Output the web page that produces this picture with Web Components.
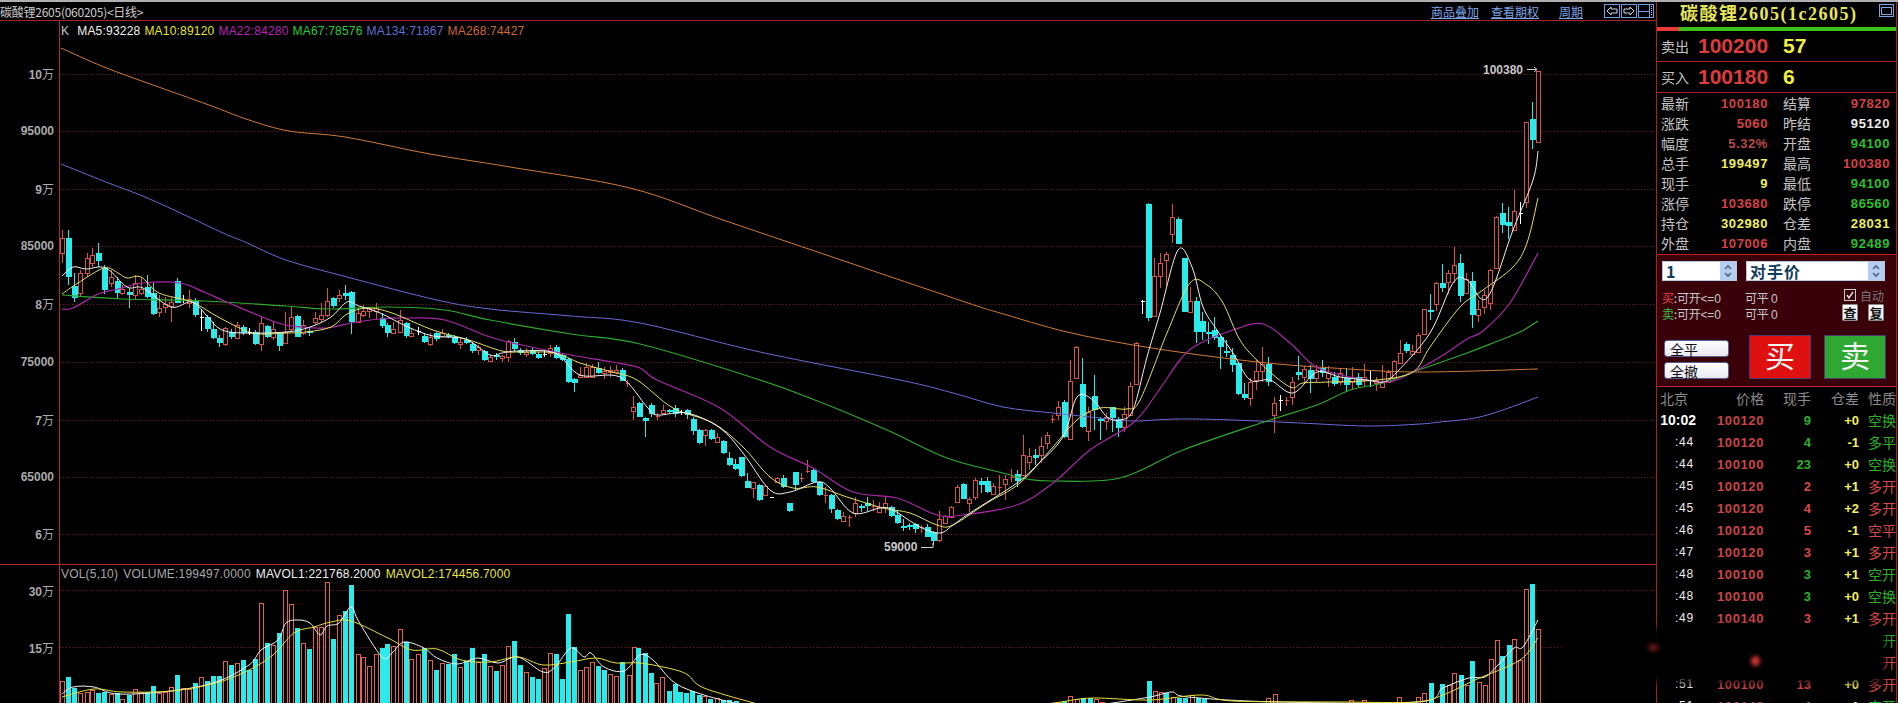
<!DOCTYPE html>
<html lang="zh"><head><meta charset="utf-8"><title>碳酸锂2605</title>
<style>
html,body{margin:0;padding:0;background:#000;width:1898px;height:703px;overflow:hidden}
</style></head><body>
<qh-app>
  <qh-header slot="head" name="碳酸锂2605(060205)&lt;日线&gt;"></qh-header>
  <qh-price slot="price"></qh-price>
  <qh-volume slot="vol"></qh-volume>
  <qh-quote slot="quote"></qh-quote>
</qh-app>
<script>
const SANS='"Liberation Sans","Noto Sans CJK SC",sans-serif';
const CJK='"Noto Sans CJK SC","Liberation Sans",sans-serif';
const C={red:'#d8524a',cy:'#2ceaea',w:'#f2f2f2',y:'#e4e060',m:'#a828a8',g:'#2fa82f',b:'#6a6ad8',o:'#d07a3c',grid:'#761414',line:'#a82424'};

/* --- digitised candles: type+x top bot hi lo, in crop coordinates --- */
const G1=`r152 55 100 30 128|c167 55 172 30 196|c182 198 233 160 245|r197 160 218 150 230|r212 115 160 100 170|r226 105 130 85 140|c241 100 122 68 140|c256 143 210 135 222|r271 172 188 150 200|c286 183 218 170 238|r300 208 218 195 225|c315 216 225 205 263|r330 190 224 165 240|r345 207 220 175 225|c359 201 230 165 235|c374 220 282 190 285|r389 265 277 225 290|r404 252 262 230 280|r418 245 258 230 305|c433 183 248 175 250|w448 240 240 225 250|r463 238 250 210 265|c477 242 285 235 290|w492 292 292 270 332|c507 290 328 285 335|c522 328 353 305 358|c536 353 370 345 380|r551 325 372 320 378|c566 335 350 328 357|r581 315 355 305 358|c595 322 340 315 345|w610 337 337 325 345|c625 335 373 330 375|r640 310 373 290 392|c654 318 352 315 355|r669 328 352 305 360|c684 340 378 335 392|r699 335 368 275 370|r713 292 328 262 335|c728 288 350 285 352|r743 315 340 300 345|c758 333 338 320 348|r772 295 305 275 315|r787 285 298 250 305|r802 243 285 205 290|c817 235 258 232 265|r831 225 235 210 245|c846 220 228 195 240|c861 216 305 212 343|r876 280 305 265 308|r890 272 285 255 290|r905 265 272 260 295|r920 265 272 250 300|c935 295 318 280 325|c949 316 338 310 350|r964 328 338 305 340|r979 300 335 270 340|c994 310 347 305 355|r1008 338 347 325 348|w1023 332 332 320 345|c1038 348 366 340 368|r1053 352 372 340 378|c1067 338 358 335 362|r1082 340 348 328 350|c1097 345 352 338 355|c1112 352 370 345 372|r1126 365 372 355 388|c1141 360 370 350 372|c1156 372 393 365 400|r1171 382 390 375 405|c1185 393 420 390 422|r1200 412 422 405 424|c1215 406 411 400 420|r1230 408 415 405 425|r1244 363 412 360 425|c1259 365 388 355 392|c1274 390 400 385 405|r1289 395 403 385 412|c1303 390 402 385 405|c1318 402 414 395 416|w1333 402 402 390 412|r1348 385 400 375 410|c1362 382 413 375 418|c1377 405 420 400 422|c1392 418 485 415 488|c1407 478 488 475 515|r1421 465 470 440 472|r1436 440 470 430 472|r1451 440 470 432 472|c1466 445 460 425 462|r1480 452 458 440 478|r1495 450 456 438 472|r1510 450 456 435 460|c1525 450 482 445 484|R1537 490 490 480 502`;
const G2=`r38 80 92 48 120|c56 68 110 65 112|c74 115 122 112 172|c92 75 102 68 110|R110 109 109 100 120|r128 90 100 75 102|c146 90 96 88 98|c164 85 102 75 110|w182 97 97 90 104|c200 90 105 88 118|c218 118 152 112 165|c236 150 190 148 192|r254 150 165 148 198|c272 150 178 148 180|r290 172 185 160 186|c308 183 220 180 222|c326 235 255 215 258|c344 252 268 238 270|c362 232 288 230 290|c380 303 323 280 325|r398 307 325 305 355|c416 315 360 313 362|r434 318 345 315 348|w452 352 352 352 352|r470 295 307 290 310|c488 293 320 285 325|c506 370 393 368 396|c524 277 315 275 330|R542 295 295 280 305|R560 272 272 240 280|c578 270 305 265 308|c596 305 345 303 347|R614 345 345 320 370|c632 345 387 343 400|c650 390 417 388 420|r668 408 422 395 424|R686 410 410 405 440|r704 370 398 350 412|c722 378 385 372 395|c740 370 378 352 392|R758 378 378 360 392|r776 380 395 365 400|r794 370 380 352 398|c812 382 408 378 410|c830 405 430 392 432|c848 438 441 418 452|c866 435 440 430 450|c884 432 447 428 458|R902 442 442 435 458|c920 440 470 432 472|c938 457 483 452 495|r956 418 480 392 485|r974 407 428 405 430|r992 382 410 378 412|r1010 320 367 315 370|c1028 313 357 310 358|r1046 358 370 350 395|r1064 300 352 295 360|c1082 303 315 293 340|c1100 303 335 292 338|r1118 318 342 310 345|R1136 320 320 285 345|r1154 297 312 285 360|R1172 290 290 268 305|c1190 283 303 270 320|r1208 225 285 165 288|r1226 227 245 205 270|c1244 225 235 208 255|r1262 198 225 170 250|r1280 165 190 155 208`;
const G3=`R157 716 716 705 728|r175 680 706 662 720|c193 666 770 660 775|r211 603 778 540 780|r229 501 593 498 595|c247 612 740 535 745|r265 697 752 680 782|c283 648 690 585 750|c301 716 724 712 780|r319 712 722 700 750|c337 682 715 680 755|c355 716 745 710 770|r373 703 740 680 755|r391 618 705 605 708|r409 488 613 487 615|W427 362 362 360 402|c445 72 415 70 422|r463 287 407 235 408|r481 250 287 220 325|r499 223 240 215 320|r517 112 162 72 188|c535 117 192 112 193|c553 235 395 233 396|r571 362 395 322 396|c589 363 457 352 488|c607 423 455 395 480|c625 456 460 425 492|c643 450 475 410 480|c661 472 500 465 568|c679 513 518 480 530|c697 524 555 505 575|c715 548 642 546 645|c733 642 655 610 660|r751 605 655 595 678|r769 572 600 540 630|r787 553 572 500 605|c805 552 605 530 618|r823 668 705 650 758|w841 660 660 645 692|R859 660 660 650 678|r877 607 650 590 675|c895 575 585 528 600|r913 568 590 558 610|c931 570 598 555 638|r949 570 595 555 605|c967 565 580 540 590|r985 580 595 558 622|c1003 590 612 575 618|r1021 580 605 565 615|c1039 595 615 565 635|r1057 590 605 562 630|c1075 590 615 580 620|r1093 590 600 552 622|w1111 600 600 570 620|r1129 600 610 592 632|r1147 605 622 555 625|r1165 575 605 570 608`;
const G4=`r43 932 985 930 990|r61 908 938 870 940|c79 883 903 876 910|r97 902 912 885 918|r115 856 906 850 908|r133 778 852 776 855|c151 780 784 732 810|r169 700 762 695 782|c187 700 714 642 725|r205 670 695 660 732|r223 646 668 590 700|c241 640 738 612 755|r259 686 728 670 730|c277 693 795 665 835|r295 778 794 750 815|r313 735 770 720 792|r331 660 758 658 780|r349 500 655 498 658|c367 490 524 458 550|c385 516 527 470 568|r403 482 540 420 542|w421 490 490 455 522|r439 217 455 215 475|c457 207 270 155 298|r475 63 275 62 276`;
function candles(src,fx,fy){return src.split('|').map(s=>{const t=s[0],[x,a,b,h,l]=s.slice(1).split(' ').map(Number);return{t,x:fx(x),a:fy(a),b:fy(b),h:fy(h),l:fy(l)}})}
const CANDLES=[
 ...candles(G1,z=>z/2.45,z=>220+z/3),
 ...candles(G2,z=>620+z/3,z=>380+z/3),
 ...candles(G3,z=>1000+z/3,z=>180+z/3),
 ...candles(G4,z=>1380+z/3,z=>50+z/3)];

const MA={
 o:'61,48 104,67 153,85 209,105 249,120 289,131 345,137 430,154 510,167 630,188 726,221 847,262 968,303 1000,313 1067,332 1133,345 1200,355 1267,363 1333,368 1417,372 1538,369',
 b:'61,164 106,182 145,197 189,217 223,233 245,242 286,260 347,277 437,300 490,309 571,316 640,323 760,352 900,380 953,393 1003,407 1053,413 1100,418 1133,421 1177,419 1233,420 1300,423 1367,426 1420,424 1440,422 1475,418 1503,410 1538,397',
 g:'62,295 122,299 204,301 286,306 327,309 388,307 445,310 490,320 571,334 640,344 760,380 820,402 887,430 947,458 1003,473 1027,479 1053,481 1120,478 1183,450 1267,421 1317,405 1350,390 1383,383 1413,372 1467,353 1493,343 1520,332 1538,321',
 m:'62,309 73,308 98,294 118,289 143,283 180,283 204,292 229,303 278,323 302,327 327,328 351,323 380,319 408,318 445,320 490,337 531,347 571,355 612,362 640,368 657,380 720,408 770,447 813,468 853,492 897,498 937,515 963,515 1017,505 1053,483 1090,450 1133,423 1157,393 1180,360 1197,345 1233,330 1263,324 1290,343 1313,365 1333,373 1367,380 1390,382 1413,372 1440,357 1467,339 1483,331 1510,303 1538,253',
 y:'62,294 78,283 104,268 118,273 127,278 141,277 159,293 192,302 220,318 253,333 286,333 306,332 331,327 347,314 367,308 392,313 433,330 469,340 502,351 522,352 555,353 580,363 612,372 637,380 673,408 713,423 743,447 770,477 793,488 817,487 847,497 883,508 910,513 937,525 953,525 987,503 1020,483 1053,447 1077,420 1100,408 1127,409 1140,400 1167,333 1190,283 1207,285 1223,303 1240,340 1260,363 1290,387 1303,383 1330,382 1377,380 1413,372 1430,347 1460,307 1483,290 1513,267 1527,243 1538,198',
 w:'62,276 73,267 86,269 106,268 127,287 143,288 171,307 192,302 208,317 220,329 241,333 286,332 310,327 331,317 347,302 359,306 380,313 408,327 433,336 465,339 490,355 502,353 518,351 555,353 580,375 620,377 647,407 657,415 687,413 720,428 743,453 770,490 790,492 817,482 830,488 853,513 880,508 893,510 920,527 940,533 953,525 970,513 1017,483 1037,465 1063,437 1077,397 1093,400 1107,417 1120,420 1133,410 1147,357 1160,313 1178,250 1192,267 1203,307 1217,330 1233,353 1250,380 1270,380 1293,393 1317,372 1340,377 1367,380 1383,382 1397,372 1430,333 1453,283 1467,280 1487,298 1513,230 1533,180 1538,151'
};
/* volume bars: type+x top */
const V1=`r152 423|c167 411|c182 445|r197 458|r212 455|r226 450|c241 458|c256 455|r271 462|c286 458|r300 478|c315 465|r330 448|r345 455|c359 455|c374 438|r389 460|r404 455|r418 442|c433 405|r448 445|r463 448|c477 430|r492 412|c507 423|c522 408|c536 408|r551 363|c566 375|r581 370|c595 360|c610 390|c625 357|r640 190|c654 310|r669 315|c684 280|r699 150|r713 193|c728 265|r743 310|c758 327|r772 262|r787 262|r802 125|c817 297|r831 225|c846 213|c861 135|r876 343|r890 352|r905 378|r920 343|c935 325|c949 312|r964 318|r979 268|c994 305|r1008 358|r1023 343|c1038 325|r1053 360|c1067 390|r1082 370|c1097 372|c1112 343|r1126 382|c1141 362|c1156 323|r1171 366|c1185 342|r1200 378|c1215 392|r1230 375|r1244 318|c1259 303|c1274 375|r1289 397|c1303 410|c1318 417|r1333 385|r1348 340|c1362 342|c1377 417|c1392 222|c1407 322|r1421 390|r1436 382|r1451 367|c1466 378|c1480 390|r1495 402|r1510 408|c1525 365|r1540 405|r1554 320|c1563 323`;
const V2=`c8 280|c17 340|r25 370|r35 352|c45 393|c55 372|c63 396|c72 400|c82 392|c92 405|r100 408|c110 418|r120 415|c130 420|c140 420|c150 422|r655 425|c665 422|r675 408|r685 418|c695 415|c705 415|r715 418|r725 425|c798 363|r807 393|r817 396|c825 400|r835 410|c845 415|c855 415|r865 405|c875 415|c885 418|r985 415|r995 402|r1115 420|r1135 420|r1190 412|r1220 412|r1230 400|c1240 370|c1258 372|r1268 375|r1277 340|c1287 345|r1296 375|c1305 303|r1315 365|r1325 375|r1334 298|r1343 240|c1352 288|c1362 255|r1371 237|r1380 300|r1390 88|c1399 72|r1408 208`;
function bars(src,fx,fy){return src.split('|').map(s=>{const [x,y]=s.slice(1).split(' ').map(Number);return{t:s[0],x:fx(x),y:fy(y)}})}
const VOLS=[...bars(V1,z=>z/2.45,z=>540+z/3),...bars(V2,z=>640+z/1.568,z=>560+z/3)];
const VL={
 w:['62,694 73,687 94,687 118,694 171,691 216,682 249,665 261,650 278,640 286,623 298,620 310,623 320,635 327,626 339,623 351,607 359,622 382,657 392,653 404,642 424,648 437,658 457,664 478,658 498,663 518,657 543,672 555,667 571,648 584,657 591,653 604,667 624,671 640,655 653,660 675,683 704,695 742,705','1100,705 1150,697 1172,692 1188,697 1278,702 1418,702 1443,688 1469,678 1485,677 1498,665 1514,648 1523,647 1538,620'],
 y:['62,697 94,689 122,692 171,691 216,683 249,670 273,655 294,633 314,627 331,622 351,621 388,638 412,650 437,649 461,660 490,662 518,657 543,665 571,662 596,658 616,663 640,663 672,669 688,675 704,688 761,705','1040,705 1061,702 1093,698 1150,700 1201,695 1233,701 1342,702 1415,702 1443,695 1475,680 1520,660 1538,638']
};

function def(name,tpl,init){
  const t=document.createElement('template');t.innerHTML=tpl;
  customElements.define(name,class extends HTMLElement{
    constructor(){super();this.attachShadow({mode:'open'}).appendChild(t.content.cloneNode(true));if(init)init(this,this.shadowRoot)}
  });
}

/* ---------- root ---------- */
def('qh-app',`<style>
:host{display:grid;grid-template-columns:1656px 242px;grid-template-rows:2px 19px 543px 1fr;width:1898px;height:703px;background:#000;color:#ccc;font-family:${SANS};position:relative;overflow:hidden}
.top{grid-column:1/3;background:#b0b0b0}
.quote{grid-column:2;grid-row:2/5;min-height:0}
.mask{position:absolute;left:1562px;top:628px;width:322px;height:54px;background:#000;filter:blur(4px)}
.blob{position:absolute;border-radius:50%;filter:blur(2px)}
.b1{left:1648px;top:644px;width:11px;height:7px;background:#6a1616}
.b2{left:1751px;top:656px;width:9px;height:10px;background:#d83636}
</style>
<div class="top"></div>
<slot name="head"></slot>
<slot name="price"></slot>
<slot name="vol"></slot>
<div class="quote"><slot name="quote"></slot></div>
<div class="mask"></div><div class="blob b1"></div><div class="blob b2"></div>`);

/* ---------- header ---------- */
def('qh-header',`<style>
:host{display:flex;align-items:center;height:18px;border-bottom:1px solid ${C.line};font:12px ${CJK};color:#ccc;white-space:nowrap}
.name{flex:none;letter-spacing:-.25px}
.links{margin-left:auto;display:flex;align-items:center;padding-right:2px}
a{color:#7ca4e6;text-decoration:underline;font-size:12px;letter-spacing:0}
a+a{margin-left:12px}
a.p{margin-left:20px}
svg{display:block;margin-left:21px}
</style>
<span class="name"></span>
<div class="links"><a>商品叠加</a><a>查看期权</a><a class="p">周期</a>
<svg width="50" height="14" viewBox="0 0 50 14" fill="none" stroke="#6f9ee2">
<rect x=".5" y=".5" width="15" height="13"/><path stroke="#c8d8f0" d="M3 7l4-4v2h6v4H7v2z"/>
<rect x="17.5" y=".5" width="15" height="13"/><path stroke="#c8d8f0" d="M30 7l-4-4v2h-6v4h6v2z"/>
<rect x="34.5" y=".5" width="15" height="13"/><path d="M35 7.5h10M45.5 1v12"/><path stroke="#c8d8f0" stroke-dasharray="1 1" d="M47.5 2v10"/>
</svg></div>`,(el,r)=>{r.querySelector('.name').textContent=el.getAttribute('name')});

/* ---------- panes ---------- */
const axisCss=`.axis{position:relative;width:59px;border-right:1px solid #b82a2a;font:bold 12px ${CJK};color:#aaa}
.axis span{position:absolute;right:5px;transform:translateY(-50%);line-height:14px;font-family:${SANS},${CJK}}
.axis b{font-family:${CJK};font-weight:400}
.plot{position:relative;flex:1;overflow:hidden}
svg{display:block;position:absolute;left:0;top:0}
.leg{position:absolute;left:1px;display:flex;gap:4px;font:12px ${SANS};white-space:nowrap;line-height:14px;letter-spacing:.2px}`;
function gridLines(ys){return ys.map(y=>`<line x1="60" x2="1656" y1="${y+.5}" y2="${y+.5}" stroke="${C.grid}" stroke-dasharray="1 2"/>`).join('')}
/* smooth curve through the digitised points (Catmull-Rom to Bezier) */
function poly(pts,col,w=1){
  const p=pts.split(' ').map(s=>s.split(',').map(Number));
  let d=`M${p[0][0]} ${p[0][1]}`;
  for(let i=0;i<p.length-1;i++){
    const a=p[i-1]||p[i],b=p[i],c=p[i+1],e=p[i+2]||c;
    d+=`C${(b[0]+(c[0]-a[0])/6).toFixed(1)} ${(b[1]+(c[1]-a[1])/6).toFixed(1)} ${(c[0]-(e[0]-b[0])/6).toFixed(1)} ${(c[1]-(e[1]-b[1])/6).toFixed(1)} ${c[0]} ${c[1]}`;
  }
  return `<path fill="none" d="${d}" stroke="${col}" stroke-width="${w}" stroke-linejoin="round"/>`;
}
function drawCandles(){return CANDLES.map(c=>{
  const X=Math.round(c.x),a=Math.round(c.a),b=Math.round(c.b),h=Math.round(c.h),l=Math.round(c.l);
  if(c.t==='c')return `<path stroke="${C.cy}" d="M${X+.5} ${h}V${l}"/><rect x="${X-2}" y="${a}" width="6" height="${Math.max(b-a,2)}" fill="${C.cy}"/>`;
  if(c.t==='r')return `<path stroke="${C.red}" d="M${X+.5} ${h}V${a}M${X+.5} ${b}V${l}"/><rect x="${X-1.5}" y="${a+.5}" width="4" height="${Math.max(b-a,1)}" fill="#000" stroke="${C.red}"/>`;
  const col=c.t==='R'?'#e84848':'#fff';
  return `<path stroke="${col}" d="M${X+.5} ${h}V${l}M${X-1.5} ${a+.5}H${X+3}"/>`;
}).join('')}
const PY=[74,131,189,246,304,362,420,477,534];
def('qh-price',`<style>:host{display:flex;height:543px}${axisCss}
.leg{top:3px}
.k{color:#c8c8c8;margin-right:4px}.a{color:#f2f2f2}.b{color:#e6e625}.c{color:#bb20bb}.d{color:#24cc3c}.e{color:#5f6fd6}.f{color:#cf6a34}
.tag{position:absolute;font:bold 12px ${SANS};color:#c8c8c8;line-height:14px}
</style>
<div class="axis"></div>
<div class="plot"><svg width="1596" height="543" viewBox="60 21 1596 543"></svg>
<div class="leg"><span class="k">K</span><span class="a">MA5:93228</span><span class="b">MA10:89120</span><span class="c">MA22:84280</span><span class="d">MA67:78576</span><span class="e">MA134:71867</span><span class="f">MA268:74427</span></div>
<span class="tag" style="left:1423px;top:42px">100380</span>
<span class="tag" style="left:824px;top:519px">59000</span>
</div>`,(el,r)=>{
  const labs=[['10','万'],['95000',''],['9','万'],['85000',''],['8','万'],['75000',''],['7','万'],['65000',''],['6','万']];
  r.querySelector('.axis').innerHTML=labs.map((l,i)=>`<span style="top:${PY[i]-21}px">${l[0]}${l[1]?`<b>${l[1]}</b>`:''}</span>`).join('');
  r.querySelector('svg').innerHTML=gridLines(PY)+`<g shape-rendering="crispEdges">${drawCandles()}</g>`+
   poly(MA.o,C.o)+poly(MA.b,C.b)+poly(MA.g,C.g,1.2)+poly(MA.m,C.m,1.2)+poly(MA.y,C.y)+poly(MA.w,C.w)+
   `<path fill="none" stroke="#d0d0d0" d="M1527 69.5H1537M1534 67l3 2.5-3 2.5M921 547.5H933V543"/>`;
});

def('qh-volume',`<style>:host{display:flex;border-top:1px solid #b82a2a;min-height:0}${axisCss}
.leg{top:2px;gap:5px}
.g{color:#a8a8a8}.a{color:#f0f0f0}.b{color:#e6e640}
</style>
<div class="axis"><span style="top:26px">30<b>万</b></span><span style="top:83px">15<b>万</b></span></div>
<div class="plot"><svg width="1596" height="138" viewBox="60 565 1596 138"></svg>
<div class="leg"><span class="g">VOL(5,10)</span><span class="g">VOLUME:199497.0000</span><span class="a">MAVOL1:221768.2000</span><span class="b">MAVOL2:174456.7000</span></div></div>`,(el,r)=>{
  const bs=VOLS.map(v=>{const X=Math.round(v.x),y=Math.round(v.y);
    return v.t==='c'?`<rect x="${X-2}" y="${y}" width="5" height="${710-y}" fill="${C.cy}"/>`
      :`<rect x="${X-1.5}" y="${y+.5}" width="4" height="${710-y}" fill="#000" stroke="#e6604f"/>`}).join('');
  r.querySelector('svg').innerHTML=gridLines([590,647])+`<g shape-rendering="crispEdges">${bs}</g>`+
   VL.w.map(p=>poly(p,'#f4f4f4')).join('')+VL.y.map(p=>poly(p,'#e6e040')).join('');
});

/* ---------- small widgets ---------- */
def('qh-spin',`<style>
:host{display:flex;height:20px;background:#fff;box-sizing:border-box;border:1px solid #b9c6dc;color:#123c5c;font:bold 16px ${CJK};line-height:18px;letter-spacing:1px}
.t{flex:1;padding-left:3px;white-space:nowrap;overflow:hidden}
.btn{width:16px;background:#b6cdf2;display:flex;align-items:center;justify-content:center}
svg{display:block}
</style><div class="t"><slot></slot></div><div class="btn"><svg width="10" height="14" viewBox="0 0 10 14" fill="none" stroke="#50607a" stroke-width="1.6"><path d="M2 5l3-3 3 3M2 9l3 3 3-3"/></svg></div>`);

def('qh-btn',`<style>
:host{display:flex;align-items:center;box-sizing:border-box;background:linear-gradient(#fff,#e8e8f0);border:1px solid #5a5f90;border-radius:3px;color:#111;font:14px ${CJK};line-height:16px;height:17px}
</style><slot></slot>`);

def('qh-trade',`<style>
:host{display:flex;align-items:center;justify-content:center;width:62px;height:44px;box-sizing:border-box;border:1px solid #4a3a70;color:#f4f4f4;font:30px "Liberation Serif","Noto Sans CJK SC",serif;line-height:40px}
</style><slot></slot>`);

/* ---------- quote panel ---------- */
const STATS=[['最新','100180','r','结算','97820','r'],['涨跌','5060','r','昨结','95120','w'],['幅度','5.32%','d','开盘','94100','g'],['总手','199497','y','最高','100380','r'],['现手','9','y','最低','94100','g'],['涨停','103680','r','跌停','86560','g'],['持仓','302980','y','仓差','28031','y'],['外盘','107006','r','内盘','92489','g']];
def('qh-stats',`<style>
:host{display:grid;grid-template-columns:32px 75px 47px 75px;grid-auto-rows:20px;padding:0 0 1px 4px;height:161px;box-sizing:border-box;align-items:center;font:14px ${CJK};color:#c4c4c4;white-space:nowrap}
.v{font:bold 13px ${SANS};letter-spacing:.6px;text-align:right}
.l2{padding-left:15px}
.r{color:#d8404a}.w{color:#f0f0f0}.g{color:#2cc02c}.y{color:#f0f060}.d{color:#b84a48}
</style>`,(el,r)=>{
  r.appendChild(document.createRange().createContextualFragment(STATS.map(s=>`<span>${s[0]}</span><span class="v ${s[2]}">${s[1]}</span><span class="l2">${s[3]}</span><span class="v ${s[5]}">${s[4]}</span>`).join('')));
});

def('qh-order',`<style>
:host{display:block;height:133px;box-sizing:border-box;background:#39000a;border-top:1px solid #c02020;border-bottom:1px solid #b82a3a;padding:6px 10px 0 5px;font:12px ${CJK};color:#c8c8c8;white-space:nowrap}
.spins{display:flex;gap:9px}
.mid{display:flex;justify-content:space-between;margin-top:9px;height:32px}
.info div{display:grid;grid-template-columns:83px auto;height:16px;line-height:16px;letter-spacing:-.2px}
i{font-style:normal}.br{color:#e84a4a}.bg{color:#3cc03c}
.num{font-family:${SANS}}
.ctl{padding-right:2px}
.auto{display:flex;align-items:center;gap:4px;color:#7a7a7a;height:14px;margin:-2px 0 2px 2px;font-size:12px}
.cb{width:12px;height:12px;box-sizing:border-box;border:1px solid #ccc;background:#39000a}
.cb svg{display:block}
.q{display:flex;gap:10px}
.q qh-btn{width:16px;justify-content:center;font-size:13px;font-weight:700;border-radius:1px;border-color:#888}
.bot{display:flex;margin-top:13px}
.left{width:65px;margin:5px 20px 0 2px;display:flex;flex-direction:column;gap:5px}
.left qh-btn{padding-left:5px}
.buy{background:#de1010;margin-right:13px}.sell{background:#2ea832}
</style>
<div class="spins"><qh-spin style="width:75px">1</qh-spin><qh-spin style="width:139px">对手价</qh-spin></div>
<div class="mid"><div class="info">
<div><span><i class="br">买</i>:可开<span class="num">&lt;=0</span></span><span>可平 <span class="num">0</span></span></div>
<div><span><i class="bg">卖</i>:可开<span class="num">&lt;=0</span></span><span>可平 <span class="num">0</span></span></div>
</div><div class="ctl"><div class="auto"><span class="cb"><svg width="10" height="10" viewBox="0 0 10 10" fill="none" stroke="#ddd" stroke-width="1.5"><path d="M2 5l2 3 4-6"/></svg></span>自动</div>
<div class="q"><qh-btn>查</qh-btn><qh-btn>复</qh-btn></div></div></div>
<div class="bot"><div class="left"><qh-btn>全平</qh-btn><qh-btn>全撤</qh-btn></div>
<qh-trade class="buy">买</qh-trade><qh-trade class="sell">卖</qh-trade></div>`);

const TICKS=[['10:02','100120','9','g','+0','空换','g'],[':44','100120','4','g','-1','多平','g'],[':44','100100','23','g','+0','空换','g'],[':45','100120','2','r','+1','多开','r'],[':45','100120','4','r','+2','多开','r'],[':46','100120','5','r','-1','空平','r'],[':47','100120','3','r','+1','多开','r'],[':48','100100','3','g','+1','空开','g'],[':48','100100','3','g','+0','空换','g'],[':49','100140','3','r','+1','多开','r'],null,null,[':51','100100','13','r','+0','多开','r'],[':51','100140','4','g','+1','空开','g']];
def('qh-ticks',`<style>
:host{display:block;flex:1;min-height:0;overflow:hidden;font:bold 13px ${SANS};white-space:nowrap}
.row{display:grid;grid-template-columns:39px 68px 47px 48px 37px;height:22px;align-items:center;overflow:hidden}
.head{color:#8c8c8c;font:14px ${CJK}}
.head span:first-child{text-align:left;padding-left:3px}
.row>span{text-align:right}
.row>span:last-child{text-align:left;padding-left:9px;font:14px ${CJK};overflow:hidden}
.head>span:last-child{color:#8c8c8c}
.only>span:last-child{text-align:right;padding:0 0 0 0;grid-column:5}
.tm{font-weight:400;font-size:12px;color:#eee;letter-spacing:.8px;padding-right:2px}
.first{font:bold 14px ${SANS};color:#fff;letter-spacing:0;padding-right:0}
.p{color:#cc444a;letter-spacing:.6px}.d{color:#f2f060}
.r{color:#d8484a}.g{color:#2cb02c}
</style><div class="row head"><span>北京</span><span>价格</span><span>现手</span><span>仓差</span><span>性质</span></div>`,(el,r)=>{
  const rows=TICKS.map((t,i)=>{
    if(!t)return `<div class="row only"><span class="${i===10?'g':'r'}">开</span></div>`;
    return `<div class="row"><span class="tm${i?'':' first'}">${t[0]}</span><span class="p">${t[1]}</span><span class="${t[3]}">${t[2]}</span><span class="d">${t[4]}</span><span class="${t[6]}">${t[5]}</span></div>`;
  }).join('');
  r.appendChild(document.createRange().createContextualFragment(rows));
});

def('qh-quote',`<style>
:host{display:flex;flex-direction:column;height:701px;box-sizing:border-box;border-left:1px solid ${C.line};border-right:1px solid ${C.line};margin-right:1px;background:#000;font-family:${CJK}}
.title{position:relative;height:25px;box-sizing:border-box;padding-left:23px;line-height:25px;font:bold 18px/25px "Liberation Serif","Noto Sans CJK SC",serif;letter-spacing:1.5px;color:#e6e65a;white-space:nowrap}
.title svg{position:absolute;right:2px;top:2px}
.bar{height:4px;background:linear-gradient(90deg,#e83838 22px,#3cc01c 22px)}
.best{display:grid;grid-template-columns:37px 85px auto;align-items:center;padding-left:4px;height:31px;border-bottom:1px solid ${C.line};box-sizing:border-box;font:14px ${CJK};color:#c4c4c4}
.best b{font:bold 21px ${SANS}}
.pr{color:#de3c3c}.vo{color:#f0f040}
</style>
<div class="title">碳酸锂2605(1c2605)<svg width="15" height="13" viewBox="0 0 15 13" fill="none" stroke="#7fa6e0"><rect x=".5" y=".5" width="14" height="12"/><rect x="2.5" y="3.5" width="10" height="7"/></svg></div>
<div class="bar"></div>
<div class="best"><span>卖出</span><b class="pr">100200</b><b class="vo">57</b></div>
<div class="best"><span>买入</span><b class="pr">100180</b><b class="vo">6</b></div>
<qh-stats></qh-stats>
<qh-order></qh-order>
<qh-ticks></qh-ticks>`);
</script>
</body></html>
